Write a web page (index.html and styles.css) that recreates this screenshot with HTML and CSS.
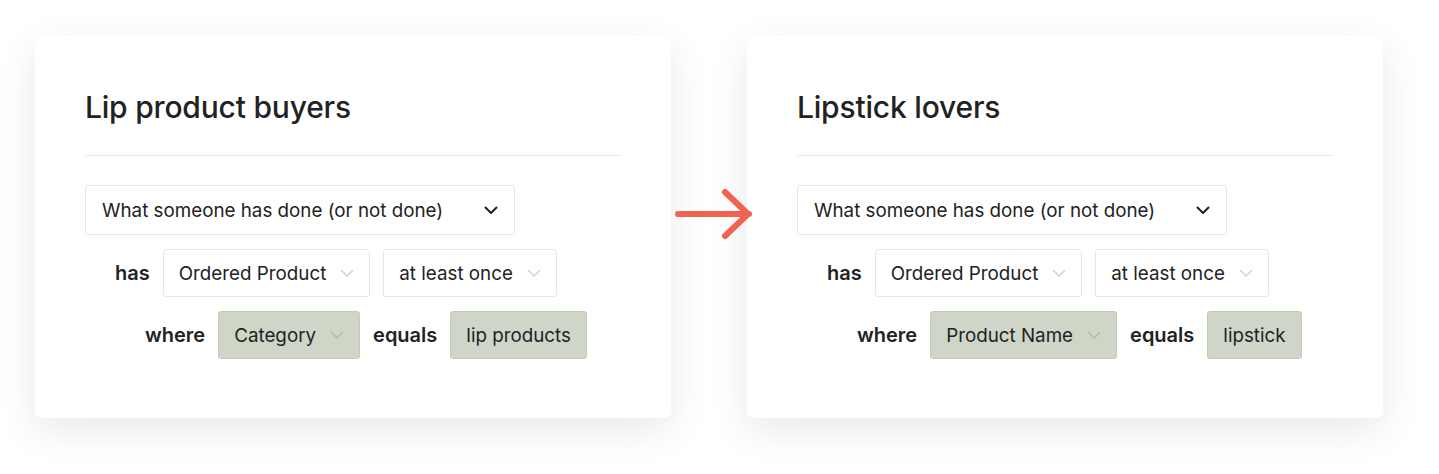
FILE: index.html
```
<!DOCTYPE html>
<html>
<head>
<meta charset="utf-8">
<link rel="stylesheet" href="styles.css">
</head>
<body>
<div class="stage">
  <div class="card">
    <h2 class="title">Lip product buyers</h2>
    <div class="divider"></div>
    <div class="row">
      <div class="box main">What someone has done (or not done)
        <svg class="chev dark" viewBox="0 0 14 8"><path d="M1 1 L7 7 L13 1" /></svg>
      </div>
    </div>
    <div class="row indent1">
      <span class="kw">has</span>
      <div class="box">Ordered Product<svg class="chev" viewBox="0 0 14 8"><path d="M1 1 L7 7 L13 1" /></svg></div>
      <div class="box">at least once<svg class="chev" viewBox="0 0 14 8"><path d="M1 1 L7 7 L13 1" /></svg></div>
    </div>
    <div class="row indent2">
      <span class="kw">where</span>
      <div class="box tag">Category<svg class="chev" viewBox="0 0 14 8"><path d="M1 1 L7 7 L13 1" /></svg></div>
      <span class="kw">equals</span>
      <div class="box tag">lip products</div>
    </div>
  </div>
  <div class="arrow">
    <svg viewBox="0 0 76 52" width="76" height="52"><path d="M7 26 H78 M54 4 L77 26 L54 48" /></svg>
  </div>
  <div class="card">
    <h2 class="title">Lipstick lovers</h2>
    <div class="divider"></div>
    <div class="row">
      <div class="box main">What someone has done (or not done)
        <svg class="chev dark" viewBox="0 0 14 8"><path d="M1 1 L7 7 L13 1" /></svg>
      </div>
    </div>
    <div class="row indent1">
      <span class="kw">has</span>
      <div class="box">Ordered Product<svg class="chev" viewBox="0 0 14 8"><path d="M1 1 L7 7 L13 1" /></svg></div>
      <div class="box">at least once<svg class="chev" viewBox="0 0 14 8"><path d="M1 1 L7 7 L13 1" /></svg></div>
    </div>
    <div class="row indent2">
      <span class="kw">where</span>
      <div class="box tag">Product Name<svg class="chev" viewBox="0 0 14 8"><path d="M1 1 L7 7 L13 1" /></svg></div>
      <span class="kw">equals</span>
      <div class="box tag">lipstick</div>
    </div>
  </div>
</div>
</body>
</html>
```
FILE: styles.css
```
* { box-sizing: border-box; }
html, body { margin: 0; padding: 0; background: #fff; }
body {
  font-family: Inter, "Noto Sans", sans-serif;
  color: #222;
  width: 1439px;
  height: 474px;
  overflow: hidden;
}
.stage {
  display: flex;
  align-items: flex-start;
  padding: 36px 0 0 35px;
}
.card {
  width: 636px;
  height: 382px;
  background: #fff;
  border-radius: 7px;
  box-shadow: 0 12px 40px rgba(0, 0, 0, 0.09);
  padding: 0 50px;
  position: relative;
  z-index: 0;
}
.title {
  margin: 0;
  padding-top: 53px;
  font-size: 30px;
  font-weight: 500;
  line-height: 36px;
  letter-spacing: -0.2px;
  color: #222;
}
.divider {
  height: 1px;
  background: #e9e9e9;
  margin-top: 30px;
  margin-bottom: 29px;
}
.row {
  display: flex;
  align-items: center;
  gap: 13px;
  margin-bottom: 14px;
}
.indent1 { padding-left: 30px; }
.indent2 { padding-left: 60px; }
.kw {
  font-size: 20px;
  font-weight: 600;
  color: #222;
}
.box {
  display: flex;
  align-items: center;
  height: 48px;
  padding: 0 15px;
  border: 1px solid #e6e6e6;
  border-radius: 3px;
  background: #fff;
  font-size: 18.8px;
  color: #222;
  white-space: nowrap;
}
.box.main {
  width: 430px;
  height: 50px;
  justify-content: space-between;
  padding: 0 16px;
}
.box.tag {
  background: #cfd6c8;
  border-color: #c3cabb;
}
.chev {
  width: 14px;
  height: 8px;
  margin-left: 14px;
  fill: none;
  stroke: #d2d2d2;
  stroke-width: 1.5;
}
.box.tag .chev { stroke: #b5bcae; }
.chev.dark {
  stroke: #222;
  stroke-width: 2;
}
.arrow {
  width: 76px;
  flex: none;
  display: flex;
  padding-top: 152px;
  position: relative;
  z-index: 1;
}
.arrow svg {
  overflow: visible;
  fill: none;
  stroke: #ef6350;
  stroke-width: 6;
  stroke-linecap: round;
  stroke-linejoin: round;
}
```
